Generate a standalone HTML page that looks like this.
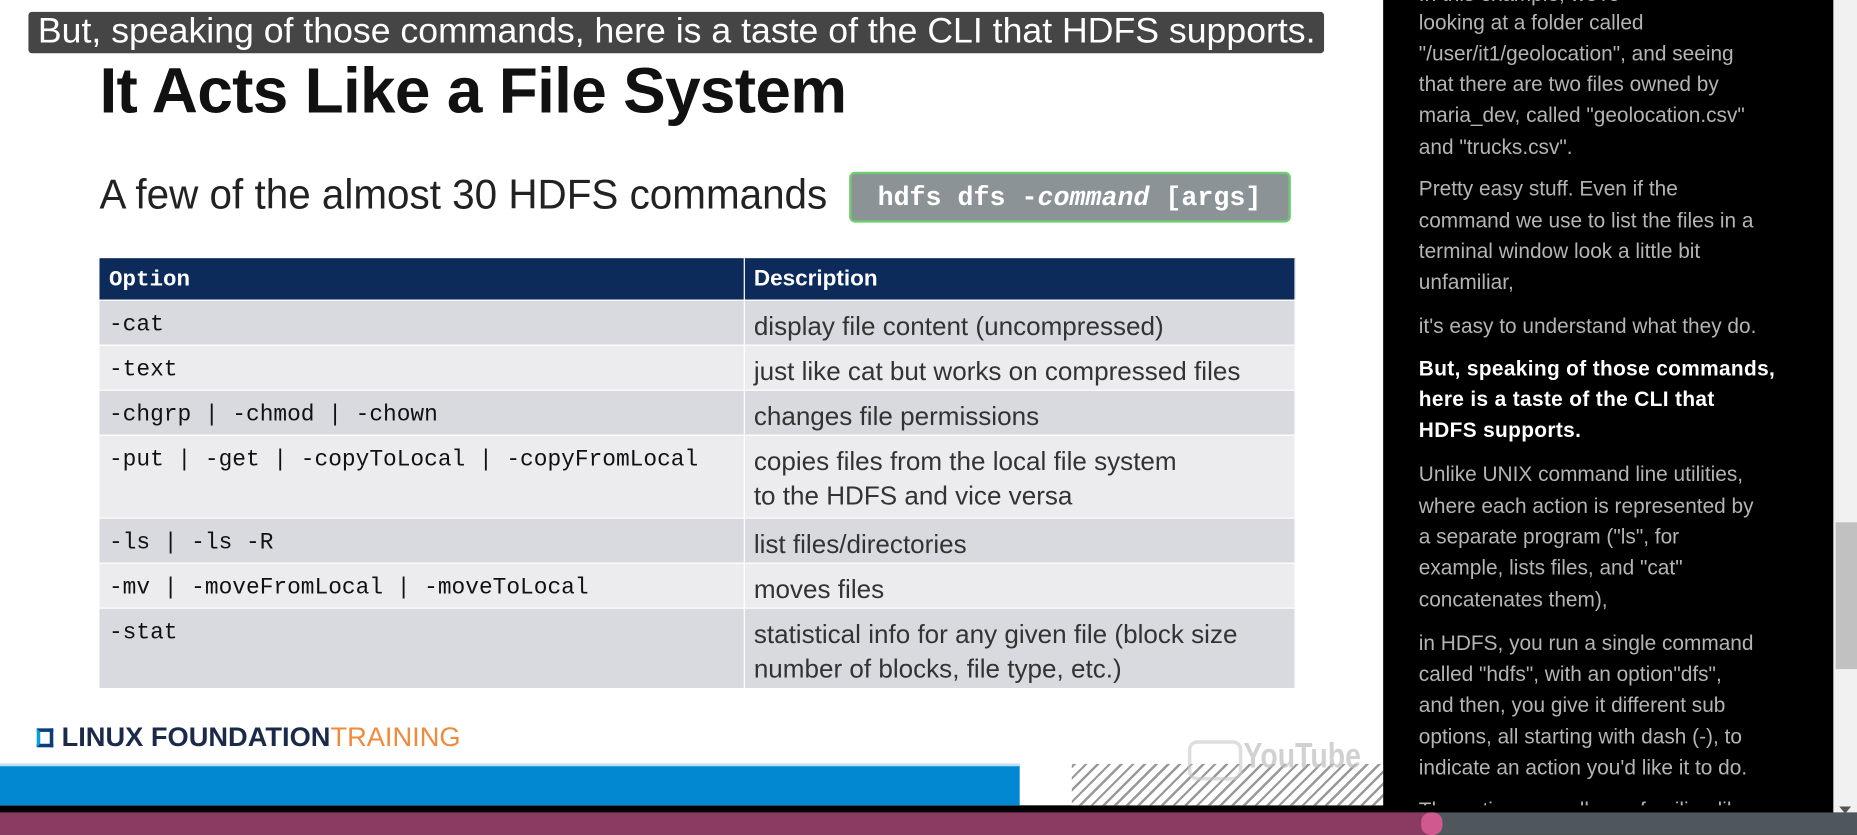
<!DOCTYPE html>
<html><head><meta charset="utf-8"><style>
*{margin:0;padding:0;box-sizing:border-box}
html,body{width:1857px;height:835px;overflow:hidden;background:#000}
#w{position:absolute;left:0;top:0;width:1568px;height:705px;transform:scale(1.18431);transform-origin:0 0;font-family:"Liberation Sans",sans-serif}
.a{position:absolute;white-space:nowrap}
#slide{position:absolute;left:0;top:0;width:1168px;height:680px;background:#fff;overflow:hidden}
table{position:absolute;left:84px;top:218px;width:1010px;border-collapse:collapse}
td{vertical-align:top;padding:8px 8px 0 8px;border-right:1px solid #fff;border-bottom:1px solid #fff}
td.o{width:544px;font-family:"Liberation Mono",monospace;font-size:19.3px;color:#111;padding-top:9px}
td.d{font-size:22px;color:#333;padding-top:7px;line-height:29px}
tr.h td{background:#0c2a5a;color:#fff;font-weight:bold;height:35px;font-family:"Liberation Sans",sans-serif;font-size:19px;padding-top:7px;line-height:22px}
tr.h td.o{font-family:"Liberation Mono",monospace}
tr.r1 td{background:#d9dadf}
tr.r2 td{background:#ececef}
#panel{position:absolute;left:1168px;top:0;width:380px;height:680px;background:#000;overflow:hidden}
#panel .a{left:30px;font-size:17.6px;color:#b4b4b4;line-height:26px}
#panel .b{color:#fff;font-weight:bold;letter-spacing:0.3px}
</style></head><body><div id="w">
<div id="slide">
 <div class="a" style="left:84px;top:46px;font-size:54px;font-weight:bold;color:#111;transform:scaleX(1.0);transform-origin:0 0;letter-spacing:-0.6px">It Acts Like a File System</div>
 <div class="a" style="left:84px;top:145px;font-size:35px;color:#222;transform:scaleX(0.975);transform-origin:0 0">A few of the almost 30 HDFS commands</div>
 <div class="a" style="left:717px;top:145px;width:373px;height:43px;background:#8b9397;border:2px solid #6ccf6c;border-radius:5px;font-family:'Liberation Mono',monospace;font-weight:bold;font-size:22.5px;color:#fff;padding:7px 0 0 22px">hdfs dfs -<i>command</i> [args]</div>
 <table>
  <tr class="h"><td class="o">Option</td><td class="d">Description</td></tr>
  <tr class="r1" style="height:38px"><td class="o">-cat</td><td class="d">display file content (uncompressed)</td></tr>
  <tr class="r2" style="height:38px"><td class="o">-text</td><td class="d">just like cat but works on compressed files</td></tr>
  <tr class="r1" style="height:38px"><td class="o">-chgrp | -chmod | -chown</td><td class="d">changes file permissions</td></tr>
  <tr class="r2" style="height:70px"><td class="o">-put | -get | -copyToLocal | -copyFromLocal</td><td class="d">copies files from the local file system<br>to the HDFS and vice versa</td></tr>
  <tr class="r1" style="height:38px"><td class="o">-ls | -ls -R</td><td class="d">list files/directories</td></tr>
  <tr class="r2" style="height:38px"><td class="o">-mv | -moveFromLocal | -moveToLocal</td><td class="d">moves files</td></tr>
  <tr class="r1" style="height:68px"><td class="o">-stat</td><td class="d">statistical info for any given file (block size<br>number of blocks, file type, etc.)</td></tr>
 </table>
 <div class="a" style="left:31px;top:615px;width:14px;height:16px;border:3px solid #0a3d7a;border-left-color:#0aa0e0"></div>
 <div class="a" style="left:52px;top:609px;font-size:23px;font-weight:bold;color:#1b2a4a;transform:scaleX(1.0);transform-origin:0 0">LINUX FOUNDATION<span style="color:#f08a3c;font-weight:normal">TRAINING</span></div>
 <div class="a" style="left:0;top:645px;width:861px;height:35px;background:#0288d1;border-top:2px solid #bfe0f2"></div>
 <div class="a" style="left:905px;top:645px;width:263px;height:35px;background:repeating-linear-gradient(-45deg,#fff 0 5px,#999 5px 7px)"></div>
 <div class="a" style="left:1003px;top:625px;width:46px;height:34px;border:3px solid rgba(200,200,200,.6);border-radius:8px"></div>
 <div class="a" style="left:1050px;top:622px;font-size:30px;font-weight:bold;color:rgba(190,190,190,.7);transform:scaleX(0.8);transform-origin:0 0">YouTube</div>
 <div class="a" style="left:24px;top:10px;width:1094px;height:35px;background:#454545;border-radius:3px"></div>
 <div class="a" style="left:32px;top:10px;font-size:30px;color:#fff;transform:scaleX(1.003);transform-origin:0 0">But, speaking of those commands, here is a taste of the CLI that HDFS supports.</div>
</div>
<div id="panel">
 <div class="a" style="top:-18px">In this example, we're</div>
 <div class="a" style="top:6px">looking at a folder called</div>
 <div class="a" style="top:32px">"/user/it1/geolocation", and seeing</div>
 <div class="a" style="top:58px">that there are two files owned by</div>
 <div class="a" style="top:84px">maria_dev, called "geolocation.csv"</div>
 <div class="a" style="top:111px">and "trucks.csv".</div>
 <div class="a" style="top:146px">Pretty easy stuff. Even if the</div>
 <div class="a" style="top:173px">command we use to list the files in a</div>
 <div class="a" style="top:199px">terminal window look a little bit</div>
 <div class="a" style="top:225px">unfamiliar,</div>
 <div class="a" style="top:262px">it's easy to understand what they do.</div>
 <div class="a b" style="top:298px">But, speaking of those commands,</div>
 <div class="a b" style="top:324px">here is a taste of the CLI that</div>
 <div class="a b" style="top:350px">HDFS supports.</div>
 <div class="a" style="top:387px">Unlike UNIX command line utilities,</div>
 <div class="a" style="top:414px">where each action is represented by</div>
 <div class="a" style="top:440px">a separate program ("ls", for</div>
 <div class="a" style="top:466px">example, lists files, and "cat"</div>
 <div class="a" style="top:493px">concatenates them),</div>
 <div class="a" style="top:530px">in HDFS, you run a single command</div>
 <div class="a" style="top:556px">called "hdfs", with an option"dfs",</div>
 <div class="a" style="top:582px">and then, you give it different sub</div>
 <div class="a" style="top:609px">options, all starting with dash (-), to</div>
 <div class="a" style="top:635px">indicate an action you'd like it to do.</div>
 <div class="a" style="top:671px">The actions are all very familiar, like</div>
</div>
<div class="a" style="left:1548px;top:0;width:20px;height:686px;background:#f1f1f1"></div>
<div class="a" style="left:1550px;top:441px;width:18px;height:124px;background:#c1c1c1"></div>
<div class="a" style="left:1553px;top:681px;width:0;height:0;border-left:5px solid transparent;border-right:5px solid transparent;border-top:6px solid #555"></div>
<div class="a" style="left:0;top:686px;width:1568px;height:19px;background:#4f575c"></div>
<div class="a" style="left:0;top:686px;width:1206px;height:19px;background:#8b3a62"></div>
<div class="a" style="left:1200px;top:686px;width:18px;height:19px;background:#d05a90;border-radius:8px"></div>
</div></body></html>
